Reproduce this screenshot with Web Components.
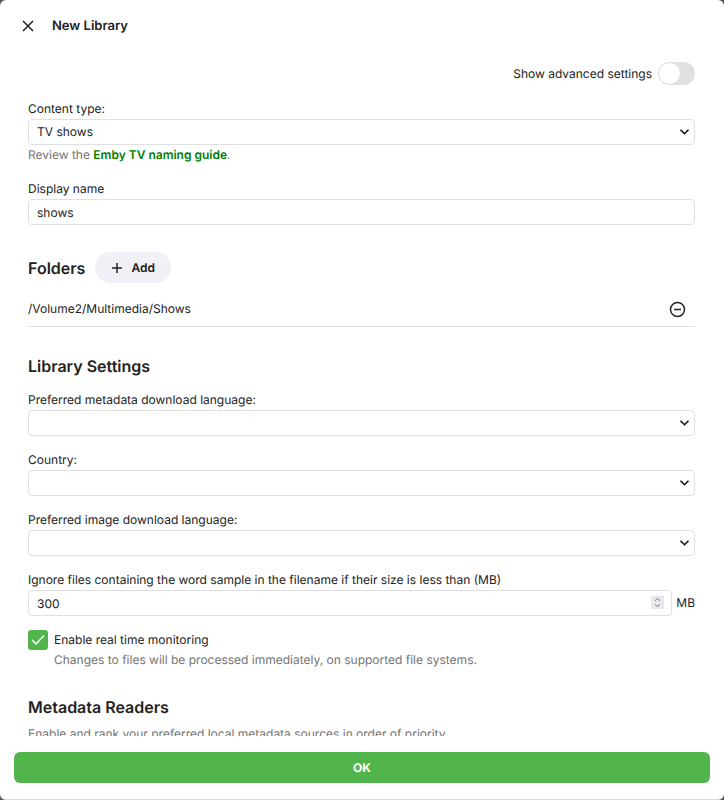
<!DOCTYPE html>
<html lang="en">
<head>
<meta charset="utf-8">
<meta name="viewport" content="width=device-width, initial-scale=1">
<title>New Library</title>
<style>
html, body {
  height: 100%;
}

body {
  --accent: #52b54b;
  --line: #e0e0e2;
  --text: #222;
  --muted: #747474;
  margin: 0;
  background: #555;
  color: var(--text);
  font: 12px/20px Inter, "Liberation Sans", sans-serif;
  text-rendering: geometricPrecision;
}
</style>
</head>
<body>

<emby-dialog heading="New Library">
  <emby-toggle label="Show advanced settings"></emby-toggle>

  <emby-select label="Content type:">
    <option>TV shows</option>
    <option>Movies</option>
    <option>Music</option>
    <span slot="help">Review the <emby-link href="#naming">Emby TV naming guide</emby-link>.</span>
  </emby-select>
  <emby-input label="Display name" value="shows"></emby-input>

  <emby-section heading="Folders">
    <emby-add-button slot="action">Add</emby-add-button>
    <emby-folder>/Volume2/Multimedia/Shows</emby-folder>
  </emby-section>

  <emby-section heading="Library Settings">
    <emby-select label="Preferred metadata download language:"></emby-select>
    <emby-select label="Country:"></emby-select>
    <emby-select label="Preferred image download language:"></emby-select>
    <emby-input type="number" value="300" unit="MB"
      label="Ignore files containing the word sample in the filename if their size is less than (MB)"></emby-input>
    <emby-checkbox label="Enable real time monitoring" checked>Changes to files will be processed immediately, on supported file systems.</emby-checkbox>
  </emby-section>

  <emby-section heading="Metadata Readers" compact>
    <emby-note>Enable and rank your preferred local metadata sources in order of priority.</emby-note>
  </emby-section>

  <emby-submit slot="footer">OK</emby-submit>
</emby-dialog>

<script>
// Shared by the select and input fields
const fieldStyle = `
:host {
  display: block;
  margin-bottom: 14px;
}

label {
  display: block;
}

.row {
  display: flex;
  align-items: center;
  gap: 4px;
}

.box {
  position: relative;
  flex: 1;
  min-width: 0;
}

.box > select,
.box > input {
  display: block;
  appearance: none;
  box-sizing: border-box;
  width: 100%;
  height: 26px;
  margin: 0;
  padding: 0 32px 0 8px;
  border: 1px solid var(--line);
  border-radius: 4px;
  background: #fff;
  color: inherit;
  font: inherit;
  text-rendering: inherit;
  outline-color: var(--accent);
}

svg {
  position: absolute;
  pointer-events: none;
}
`

function define(name, html, setup) {
  const template = document.createElement('template')
  template.innerHTML = html.trim()

  window.customElements.define(name, class extends HTMLElement {
    constructor() {
      super()
      this.attachShadow({ mode: 'open' })
      this.shadowRoot.appendChild(template.content.cloneNode(true))
      if (setup) setup(this, selector => this.shadowRoot.querySelector(selector))
    }
  })
}

define('emby-dialog', `
<style>
:host {
  display: flex;
  flex-direction: column;
  box-sizing: border-box;
  height: 100vh;
  border-bottom: 1px solid #ddd;
  border-radius: 6px;
  background: #fff;
  overflow: hidden;
}

header {
  display: flex;
  align-items: center;
  gap: 12px;
  padding: 16px;
}

h1 {
  margin: 0;
  font-size: 13px;
  font-weight: 600;
}

button {
  display: flex;
  padding: 4px;
  border: 0;
  background: none;
  color: inherit;
  cursor: pointer;
}

main {
  flex: 1;
  min-height: 0;
  padding: 10px 29px 20px 28px;
  overflow-y: auto;
  scrollbar-width: none;
}

footer {
  padding: 16px 14px;
}
</style>
<header>
  <button type="button" aria-label="Close">
    <svg width="16" height="12" viewBox="0 0 16 12" fill="none" stroke="currentColor" stroke-width="1.5">
      <path d="M3 1l10 10M13 1L3 11"/>
    </svg>
  </button>
  <h1></h1>
</header>
<main><slot></slot></main>
<footer><slot name="footer"></slot></footer>
`, (el, $) => {
  $('h1').textContent = el.getAttribute('heading')
})

define('emby-toggle', `
<style>
:host {
  display: flex;
  justify-content: flex-end;
  align-items: center;
  gap: 6px;
  margin-bottom: 14px;
}

input {
  appearance: none;
  display: flex;
  box-sizing: border-box;
  width: 37px;
  height: 23px;
  margin: 0;
  padding: 1px;
  border-radius: 12px;
  background: #e0e0e0;
  cursor: pointer;
}

input::before {
  content: "";
  width: 21px;
  height: 21px;
  border-radius: 50%;
  background: #fff;
}

input:checked {
  justify-content: flex-end;
  background: var(--accent);
}
</style>
<label for="toggle"></label>
<input id="toggle" type="checkbox" role="switch">
`, (el, $) => {
  $('label').textContent = el.getAttribute('label')
})

define('emby-select', `
<style>
${fieldStyle}
svg {
  top: 9px;
  right: 5px;
}

::slotted([slot=help]) {
  display: block;
  color: var(--muted);
}
</style>
<label for="select"></label>
<div class="box">
  <select id="select"></select>
  <svg width="11" height="8" viewBox="0 0 11 8" fill="none" stroke="#111" stroke-width="1.6">
    <path d="M1.5 1.7l4 4 4-4"/>
  </svg>
</div>
<slot name="help"></slot>
`, (el, $) => {
  $('label').textContent = el.getAttribute('label')
  // options can't be slotted into a select, so move them
  $('select').append(...el.querySelectorAll('option'))
})

define('emby-input', `
<style>
${fieldStyle}
input::-webkit-inner-spin-button {
  appearance: none;
}

svg {
  top: 6px;
  right: 8px;
}

[hidden] {
  display: none;
}
</style>
<label for="input"></label>
<div class="row">
  <div class="box">
    <input id="input">
    <svg width="13" height="13" viewBox="0 0 13 13" fill="none" stroke="#77777c">
      <path d="M0 0h13v13H0z" fill="#e8e8ed" stroke="none"/>
      <path d="M4 4.7l2.5-2.2L9 4.7M4 8.3l2.5 2.2L9 8.3"/>
    </svg>
  </div>
  <span class="unit"></span>
</div>
`, (el, $) => {
  const type = el.getAttribute('type') || 'text'
  $('label').textContent = el.getAttribute('label')
  $('input').type = type
  $('input').value = el.getAttribute('value')
  $('.unit').textContent = el.getAttribute('unit')
  $('.unit').hidden = !el.hasAttribute('unit')
  if (type !== 'number') $('svg').remove()
})

define('emby-link', `
<style>
a {
  color: #008000;
  font-weight: 600;
  text-decoration: none;
}
</style>
<a><slot></slot></a>
`, (el, $) => {
  $('a').href = el.getAttribute('href')
})

define('emby-section', `
<style>
:host {
  display: block;
}

header {
  display: flex;
  align-items: center;
  gap: 10px;
  min-height: 31px;
  padding: 13px 0 9px;
}

:host([compact]) header {
  padding-bottom: 2px;
}

h2 {
  margin: 0;
  font-size: 16px;
  font-weight: 600;
}
</style>
<header>
  <h2></h2>
  <slot name="action"></slot>
</header>
<slot></slot>
`, (el, $) => {
  $('h2').textContent = el.getAttribute('heading')
})

define('emby-add-button', `
<style>
button {
  display: flex;
  align-items: center;
  gap: 8px;
  height: 31px;
  padding: 0 16px;
  border: 0;
  border-radius: 16px;
  background: #f1f0f6;
  color: inherit;
  font: inherit;
  font-weight: 600;
  text-rendering: inherit;
  cursor: pointer;
}
</style>
<button type="button">
  <svg width="12" height="12" viewBox="0 0 12 12" fill="none" stroke="currentColor" stroke-width="1.5">
    <path d="M6 1v10M1 6h10"/>
  </svg>
  <slot></slot>
</button>
`)

define('emby-folder', `
<style>
:host {
  display: flex;
  align-items: center;
  justify-content: space-between;
  height: 34px;
  margin-bottom: 10px;
  padding-right: 9px;
  border-bottom: 1px solid var(--line);
}

button {
  display: flex;
  padding: 0;
  border: 0;
  background: none;
  color: inherit;
  cursor: pointer;
}
</style>
<span><slot></slot></span>
<button type="button" aria-label="Remove folder">
  <svg width="17" height="17" viewBox="0 0 17 17" fill="none" stroke="currentColor" stroke-width="1.5">
    <circle cx="8.5" cy="8.5" r="7"/>
    <path d="M5 8.5h7"/>
  </svg>
</button>
`)

define('emby-checkbox', `
<style>
:host {
  display: grid;
  grid-template-columns: 20px 1fr;
  column-gap: 6px;
  margin-bottom: 8px;
}

.check {
  display: grid;
}

.check > * {
  grid-area: 1 / 1;
}

input {
  appearance: none;
  box-sizing: border-box;
  width: 20px;
  height: 20px;
  margin: 0;
  border: 1px solid #bbb;
  border-radius: 3px;
}

input:checked {
  border: 0;
  background: var(--accent);
}

svg {
  pointer-events: none;
}

.help {
  grid-column: 2;
  color: var(--muted);
}
</style>
<span class="check">
  <input id="check" type="checkbox">
  <svg width="20" height="20" viewBox="0 0 20 20" fill="none" stroke="#fff" stroke-width="1.5">
    <path d="M4 10l4 4 8-8.5"/>
  </svg>
</span>
<label for="check"></label>
<span class="help"><slot></slot></span>
`, (el, $) => {
  $('label').textContent = el.getAttribute('label')
  $('input').checked = el.hasAttribute('checked')
})

define('emby-note', `
<style>
:host {
  display: block;
  color: var(--muted);
}
</style>
<slot></slot>
`)

define('emby-submit', `
<style>
button {
  display: block;
  width: 100%;
  height: 31px;
  border: 0;
  border-radius: 6px;
  background: var(--accent);
  color: #fff;
  font: inherit;
  font-weight: 700;
  text-rendering: inherit;
  cursor: pointer;
}
</style>
<button type="submit"><slot></slot></button>
`)
</script>
</body>
</html>
